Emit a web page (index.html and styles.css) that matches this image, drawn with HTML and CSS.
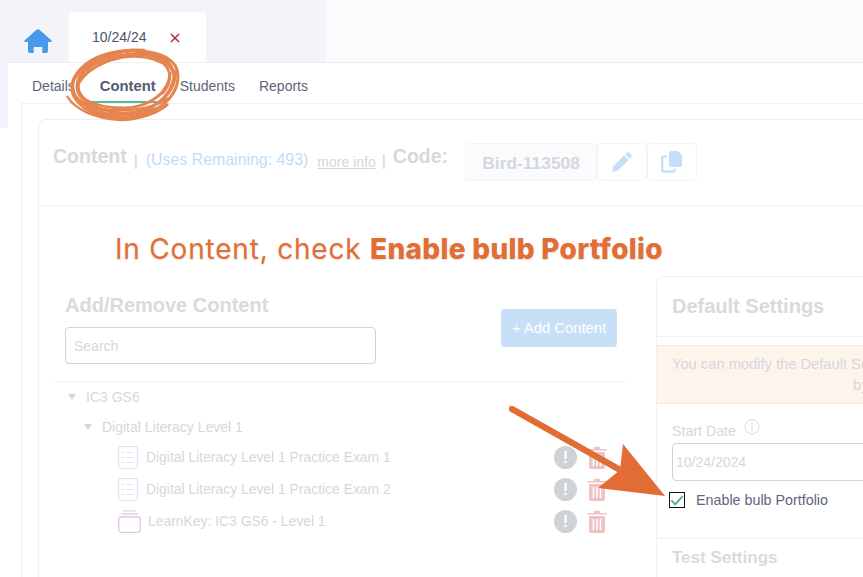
FILE: index.html
```html
<!DOCTYPE html>
<html lang="en">
<head>
    <meta charset="UTF-8">
    <meta name="viewport" content="width=device-width, initial-scale=1.0">
    <title>Enable bulb Portfolio</title>
    <link rel="stylesheet" href="styles.css">
</head>
<body>
    <!-- top tabs -->
    <div class="topbar">
        <svg class="home" viewBox="0 0 28 24"><path d="M12.500 .8 Q14 -.3 15.500 .8 L27.300 11.200 Q28.600 13 26.500 13 H24 V22 Q24 24 22 24 H18.300 V18 H9.700 V24 H6 Q4 24 4 22 V13 H1.500 Q-.6 13 .7 11.200 Z" fill="#4a98ea"/></svg>
        <div class="date-tab">
            <span>10/24/24</span>
            <svg class="close" viewBox="0 0 10 10"><path d="M1 1 L9 9 M9 1 L1 9" stroke="#b6303f" stroke-width="1.600"/></svg>
        </div>
    </div>

    <div class="panel">
        <div class="tabs">
            <span class="tab">Details</span>
            <span class="tab active">Content</span>
            <span class="tab">Students</span>
            <span class="tab">Reports</span>
        </div>

        <div class="frame">
            <div class="card">
                <div class="card-head">
                    <span class="head-title">Content</span>
                    <span class="sep">|</span>
                    <span class="uses">(Uses Remaining: 493)</span>
                    <span class="more">more info</span>
                    <span class="sep sep-code">|</span>
                    <span class="head-title">Code:</span>
                    <div class="code-group">
                        <div class="code">Bird-113508</div>
                        <div class="code-btn">
                            <svg viewBox="0 0 22 22" width="22" height="22"><path d="M16 1.500 Q17 .8 18 1.500 L20.500 4 Q21.200 5 20.500 6 L18.600 7.900 L14.100 3.400 Z M13 4.500 L17.500 9 L7 19.500 L1 21 L2.500 15 Z" fill="#c6dff8"/></svg>
                        </div>
                        <div class="code-btn">
                            <svg viewBox="0 0 22 22" width="22" height="22"><path d="M10 0 H17 L21 4 V14 Q21 16 19 16 H10 Q8 16 8 14 V2 Q8 0 10 0 Z" fill="#c6dff8"/><path d="M6 5.500 H2.500 Q1.200 5.500 1.200 6.800 V19.300 Q1.200 20.600 2.500 20.600 H12.500 Q13.800 20.600 13.800 19.300 V17.500" fill="none" stroke="#c6dff8" stroke-width="2.200"/></svg>
                        </div>
                    </div>
                </div>

                <h1 class="callout">In Content, check <b>Enable bulb Portfolio</b></h1>

                <div class="columns">
                    <div class="content-col">
                        <h2 class="col-title">Add/Remove Content</h2>
                        <div class="search-row">
                            <div class="search">Search</div>
                            <div class="add-btn">+ Add Content</div>
                        </div>
                        <ul class="tree">
                            <li class="tree-top"><i class="caret"></i>IC3 GS6</li>
                            <li class="tree-sub"><i class="caret"></i>Digital Literacy Level 1</li>
                            <li class="tree-item">
                                <svg class="list-icon" viewBox="0 0 20 23"><rect x=".7" y=".7" width="18.600" height="21.600" rx="2" fill="none" stroke="#e7e2f6" stroke-width="1.300"/><path d="M4 6.500 H6 M8.500 6.500 H16 M4 11.500 H6 M8.500 11.500 H16 M4 16.500 H6 M8.500 16.500 H16" stroke="#e7e2f6" stroke-width="1.200"/></svg>
                                <span class="item-name">Digital Literacy Level 1 Practice Exam 1</span>
                                <i class="warn">!</i>
                                <svg class="trash" viewBox="0 0 20 23"><path d="M7 3 V1.500 Q7 .7 8 .7 H12 Q13 .7 13 1.500 V3 H19 Q20 3 20 4.500 H0 Q0 3 1 3 Z M2 6 H18 V21 Q18 23 16 23 H4 Q2 23 2 21 Z" fill="#edc3c6"/><path d="M6.500 9 V20 M10 9 V20 M13.500 9 V20" stroke="#fff" stroke-width="1.500"/></svg>
                            </li>
                            <li class="tree-item">
                                <svg class="list-icon" viewBox="0 0 20 23"><rect x=".7" y=".7" width="18.600" height="21.600" rx="2" fill="none" stroke="#e7e2f6" stroke-width="1.300"/><path d="M4 6.500 H6 M8.500 6.500 H16 M4 11.500 H6 M8.500 11.500 H16 M4 16.500 H6 M8.500 16.500 H16" stroke="#e7e2f6" stroke-width="1.200"/></svg>
                                <span class="item-name">Digital Literacy Level 1 Practice Exam 2</span>
                                <i class="warn">!</i>
                                <svg class="trash" viewBox="0 0 20 23"><path d="M7 3 V1.500 Q7 .7 8 .7 H12 Q13 .7 13 1.500 V3 H19 Q20 3 20 4.500 H0 Q0 3 1 3 Z M2 6 H18 V21 Q18 23 16 23 H4 Q2 23 2 21 Z" fill="#edc3c6"/><path d="M6.500 9 V20 M10 9 V20 M13.500 9 V20" stroke="#fff" stroke-width="1.500"/></svg>
                            </li>
                            <li class="tree-item">
                                <svg class="list-icon pack" viewBox="0 0 23 23"><path d="M5 .8 H18 M3 4 H20" stroke="#eccdee" stroke-width="1.300"/><rect x=".7" y="7" width="21.600" height="15.300" rx="2.500" fill="none" stroke="#e9c3ec" stroke-width="1.300"/></svg>
                                <span class="item-name pack-name">LearnKey: IC3 GS6 - Level 1</span>
                                <i class="warn">!</i>
                                <svg class="trash" viewBox="0 0 20 23"><path d="M7 3 V1.500 Q7 .7 8 .7 H12 Q13 .7 13 1.500 V3 H19 Q20 3 20 4.500 H0 Q0 3 1 3 Z M2 6 H18 V21 Q18 23 16 23 H4 Q2 23 2 21 Z" fill="#edc3c6"/><path d="M6.500 9 V20 M10 9 V20 M13.500 9 V20" stroke="#fff" stroke-width="1.500"/></svg>
                            </li>
                        </ul>
                    </div>

                    <div class="settings">
                        <h2 class="settings-title">Default Settings</h2>
                        <div class="notice">You can modify the Default Settings for all content in this class<br><span class="notice-by">by</span></div>
                        <div class="settings-body">
                            <div class="field-label">Start Date
                                <svg class="info" viewBox="0 0 16 16"><circle cx="8" cy="8" r="7" fill="none" stroke="#c6dff8" stroke-width="1"/><path d="M8 7 V12 M8 4 V5.400" stroke="#c6dff8" stroke-width="1.200"/></svg>
                            </div>
                            <div class="date-input">10/24/2024</div>
                            <label class="enable">
                                <span class="check">
                                    <svg viewBox="0 0 16 16" width="16" height="16"><path d="M1.500 8.500 L6 13 L14.500 3.500" fill="none" stroke="#4fb28c" stroke-width="2.200"/></svg>
                                </span>
                                Enable bulb Portfolio
                            </label>
                        </div>
                        <h2 class="settings-title test-title">Test Settings</h2>
                    </div>
                </div>
            </div>
        </div>
    </div>

    <!-- annotations on top of the screenshot -->
    <svg class="scribble" viewBox="60 44 130 84" fill="none" stroke="#e5844f">
        <path d="M165 58 C140 44 95 50 78 72 C62 92 78 114 118 118 C150 120 178 100 178 76 C178 60 160 50 135 52" stroke-width="3"/>
        <path d="M170 62 C145 48 100 54 82 74 C70 94 88 110 122 113 C150 114 172 98 174 76 C172 62 155 53 125 54" stroke-width="3"/>
        <path d="M150 55 C120 52 88 66 78 84 C76 100 96 108 125 108 C150 107 170 92 170 72" stroke-width="3"/>
        <path d="M67 96 C75 110 95 118 120 120 C140 120 160 112 168 104" stroke-width="2.500"/>
        <path d="M145 50 C115 48 85 60 74 80 C68 98 90 113 118 115 C148 116 176 96 176 70" stroke-width="2.500"/>
        <path d="M72 92 C80 106 100 111 128 110 C146 109 160 104 168 98" stroke-width="2.500"/>
        <path d="M104 56 C125 48 155 50 168 62 C178 72 176 88 164 98" stroke-width="2.500"/>
        <path d="M132 50 C110 54 90 62 80 76 C72 90 80 104 104 110" stroke-width="3"/>
        <path d="M112 60 C130 54 150 56 164 64 C172 72 172 84 162 94" stroke-width="2.500"/>
        <path d="M86 108 C104 118 136 118 156 108" stroke-width="3"/>
    </svg>
    <svg class="arrow" viewBox="0 0 160 95">
        <path d="M3 3 L113 65" stroke="#e26d34" stroke-width="6.500" stroke-linecap="round"/>
        <path d="M114 38 L156 90 L89 82 L111 64 Z" fill="#e26d34"/>
    </svg>
</body>
</html>
```

FILE: styles.css
```css
body {
    margin: 0;
    width: 863px;
    height: 577px;
    overflow: hidden;
    position: relative;
    background: linear-gradient(#f2f4f9 128px, #fff 128px);
    font-family: 'Liberation Sans', Arial, sans-serif;
    color: #d5d7de;
}

/* top tabs */
.topbar {
    height: 62px;
    box-sizing: border-box;
    padding: 12px 0 0 24px;
    display: flex;
    align-items: flex-end;
    background: linear-gradient(to right, #f2f4f9 326px, #fbfbfe 326px);
}

.home {
    width: 28px;
    height: 24px;
    margin-bottom: 9px;
}

.date-tab {
    width: 137px;
    height: 50px;
    margin-left: 17px;
    padding: 17px 0 0 23px;
    box-sizing: border-box;
    display: flex;
    background-color: #fff;
    border-radius: 4px 4px 0 0;
    color: #4c5468;
    font-size: 14px;
}

.close {
    width: 10px;
    height: 10px;
    margin: 4px 0 0 23px;
}

.panel {
    margin-left: 8px;
    background-color: #fff;
    border-top: 1px solid #eceef3;
}

/* details, content... */
.tabs {
    height: 40px;
    display: flex;
    padding-left: 12px;
}

.tab {
    padding: 15px 12px 0;
    color: #5d6579;
    font-size: 14px;
}

.tab.active {
    margin-left: 1px;
    color: #525b70;
    font-size: 14.800px;
    font-weight: bold;
    position: relative;
}

.tab.active::after {
    content: '';
    position: absolute;
    left: 0;
    right: 11px;
    bottom: 0;
    height: 2px;
    background-color: #4fbf96;
}

.frame {
    margin-left: 13px;
    padding: 15px 0 0 16px;
    border-left: 1px solid #eff0f4;
    border-top: 1px solid #eff0f4;
}

.card {
    border-left: 1px solid #eceef2;
    border-top: 1px solid #eceef2;
    border-top-left-radius: 8px;
}

.card-head {
    height: 86px;
    box-sizing: border-box;
    padding: 25px 0 0 14px;
    display: flex;
    align-items: flex-start;
    border-bottom: 1px solid #f0f1f4;
}

.head-title {
    font-size: 19.500px;
    font-weight: bold;
    color: #d6d8de;
}

.sep {
    margin: 7px 8px 0 7px;
    font-size: 16px;
    color: #d5d7de;
}

.sep-code {
    margin: 7px 7px 0 6px;
}

.uses {
    margin-top: 6px;
    font-size: 15.900px;
    color: #c3dcf6;
}

.more {
    margin: 9px 0 0 9px;
    font-size: 14px;
    color: #d5d7de;
    text-decoration: underline;
}

.code-group {
    display: flex;
    margin: -2px 0 0 17px;
}

.code {
    width: 132px;
    height: 38px;
    box-sizing: border-box;
    line-height: 38px;
    text-align: center;
    background-color: #fafbfd;
    border: 1px solid #f3f4f7;
    border-radius: 4px;
    font-size: 17.400px;
    font-weight: bold;
    color: #d5d7de;
}

.code-btn {
    width: 50px;
    height: 38px;
    box-sizing: border-box;
    display: flex;
    align-items: center;
    justify-content: center;
    border: 1px solid #f3f4f7;
    border-radius: 4px;
}

.callout {
    margin: 25px 0 0 76px;
    font-family: Inter, sans-serif;
    font-size: 28px;
    line-height: 36px;
    font-weight: 400;
    letter-spacing: .8px;
    color: #e46d33;
    text-shadow: 0 1px 2px rgba(0, 0, 0, .15);
}

.callout b {
    font-weight: 800;
    letter-spacing: .3px;
}

.columns {
    display: flex;
    height: 310px;
    margin-top: 9px;
}

.content-col {
    width: 617px;
    flex-shrink: 0;
}

.col-title {
    margin: 18px 0 0 26px;
    font-size: 20px;
    line-height: 23px;
    color: #d8dae0;
}

.search-row {
    display: flex;
    align-items: flex-start;
    margin: 10px 0 0 26px;
}

.search {
    width: 311px;
    height: 37px;
    line-height: 36px;
    padding-left: 8px;
    box-sizing: border-box;
    border: 1px solid #d2d3da;
    border-radius: 4px;
    font-size: 14px;
    color: #d5d7de;
}

.add-btn {
    width: 116px;
    height: 38px;
    margin: -18px 0 0 125px;
    line-height: 38px;
    text-align: center;
    background-color: #c7e0f8;
    border-radius: 4px;
    font-size: 14.800px;
    color: #fff;
}

.tree {
    width: 575px;
    margin: 17px 0 0 14px;
    padding: 0;
    list-style-type: none;
    border-top: 1px solid #f2f3f6;
    font-size: 14px;
}

.tree li {
    display: flex;
    align-items: center;
}

.tree-top {
    height: 30px;
    padding-left: 15px;
}

.tree-sub {
    height: 29.500px;
    padding-left: 31px;
}

.caret {
    width: 0;
    height: 0;
    margin-right: 10px;
    border-left: 4px solid transparent;
    border-right: 4px solid transparent;
    border-top: 6px solid #d5d7de;
}

.tree-item {
    height: 32px;
    padding-left: 65px;
}

.list-icon {
    width: 20px;
    height: 23px;
    flex-shrink: 0;
}

.pack {
    width: 23px;
}

.item-name {
    width: 408px;
    margin: -1px 0 0 8px;
    flex-shrink: 0;
    font-size: 13.900px;
}

.pack-name {
    width: 406px;
    margin-left: 7px;
}

.warn {
    width: 23px;
    height: 23px;
    flex-shrink: 0;
    line-height: 23px;
    text-align: center;
    border-radius: 50%;
    background-color: #cfd2d7;
    color: #fff;
    font-style: normal;
    font-weight: bold;
    font-size: 16px;
}

.trash {
    width: 20px;
    height: 23px;
    margin-left: 10px;
    flex-shrink: 0;
}

/* right column */
.settings {
    width: 420px;
    flex-shrink: 0;
    border-left: 1px solid #f0f1f4;
    border-top: 1px solid #f0f1f4;
    border-top-left-radius: 8px;
}

.settings-title {
    margin: 0;
    height: 60px;
    line-height: 59px;
    padding-left: 15px;
    box-sizing: border-box;
    font-size: 20px;
    color: #d8dae0;
    border-bottom: 1px solid #f0f1f4;
}

.notice {
    height: 59px;
    margin-top: 8px;
    padding: 8px 0 0 15px;
    box-sizing: border-box;
    overflow: hidden;
    background-color: #fdf5ec;
    border-top: 1px solid #fae9d6;
    border-bottom: 1px solid #fae9d6;
    font-size: 14.700px;
    line-height: 21px;
    color: #d5d7de;
    white-space: nowrap;
}

.notice-by {
    margin-left: 181px;
}

.settings-body {
    padding: 18px 0 0 15px;
    height: 134px;
    box-sizing: border-box;
}

.field-label {
    display: flex;
    align-items: center;
    height: 17px;
    font-size: 14.200px;
}

.info {
    width: 16px;
    height: 16px;
    margin: -8px 0 0 8px;
}

.date-input {
    width: 300px;
    height: 38px;
    line-height: 37px;
    margin-top: 4px;
    padding-left: 3px;
    box-sizing: border-box;
    border: 1px solid #d2d3da;
    border-radius: 4px;
    font-size: 14px;
}

.enable {
    display: flex;
    align-items: center;
    margin-top: 11px;
    margin-left: -3px;
    font-size: 14.300px;
    color: #5f6578;
}

.check {
    width: 16px;
    height: 16px;
    box-sizing: border-box;
    margin-right: 11px;
    border: 1.500px solid #111;
    display: flex;
    align-items: center;
    justify-content: center;
    flex-shrink: 0;
}

.test-title {
    border-top: 1px solid #f0f1f4;
    border-bottom: none;
    height: 40px;
    line-height: 38px;
    font-size: 17px;
}

/* annotations */
.scribble {
    position: absolute;
    left: 60px;
    top: 44px;
    width: 130px;
    height: 84px;
}

.arrow {
    position: absolute;
    left: 509px;
    top: 406px;
    width: 160px;
    height: 95px;
}
```
